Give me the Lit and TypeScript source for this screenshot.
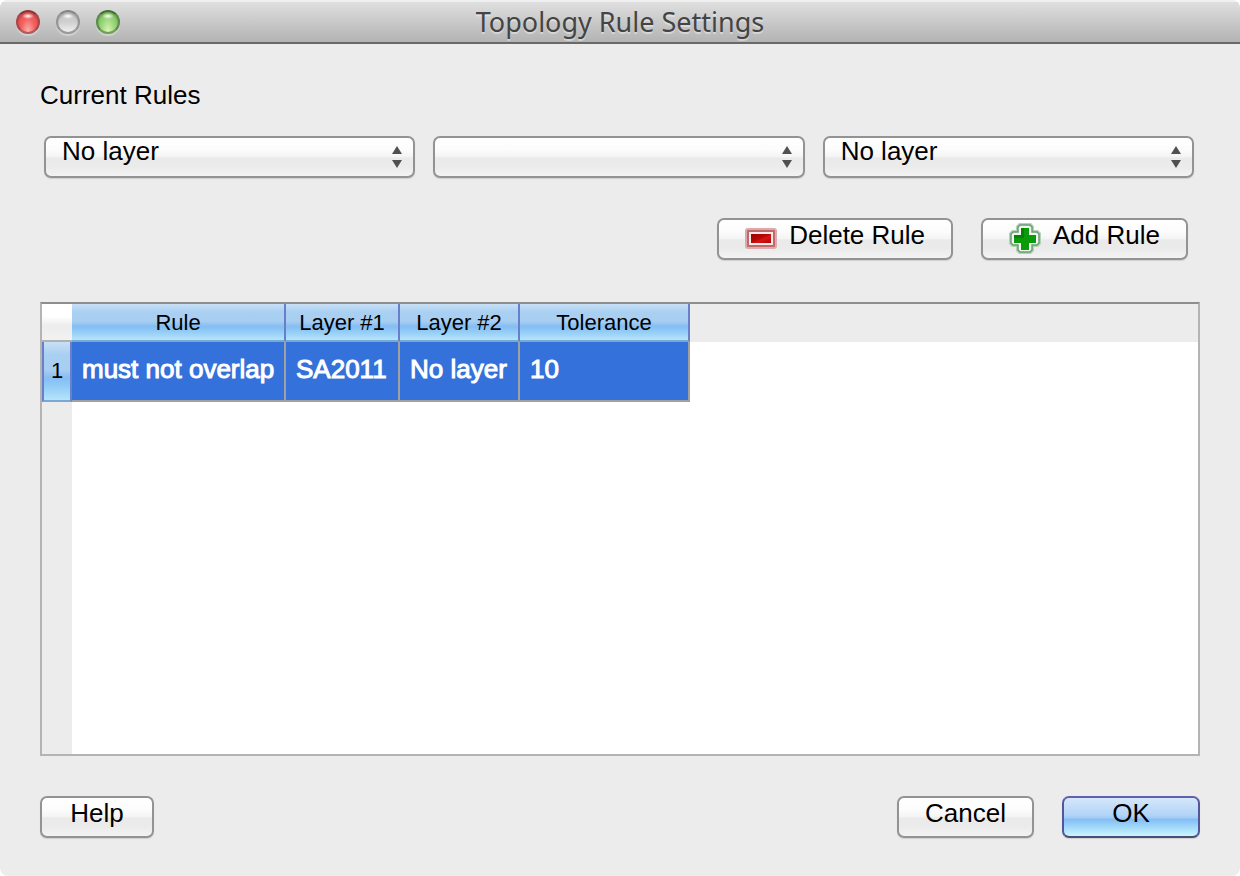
import { LitElement, html, css, svg } from "lit";
import { customElement, property, state } from "lit/decorators.js";

interface Rule {
  rule: string;
  layer1: string;
  layer2: string;
  tolerance: string;
}

const minusIcon = svg`
  <svg class="icon" viewBox="0 0 32 32" aria-hidden="true">
    <defs>
      <linearGradient id="minus-fill" x1="0" y1="0" x2="1" y2="1">
        <stop offset="0" stop-color="#a00000"/>
        <stop offset=".45" stop-color="#b40808"/>
        <stop offset=".6" stop-color="#d81414"/>
        <stop offset="1" stop-color="#b00404"/>
      </linearGradient>
    </defs>
    <rect x="0" y="5" width="32" height="21" rx="3" fill="#dcaaaa"/>
    <rect x="2" y="7" width="28" height="17" rx="1" fill="#c0686a"/>
    <rect x="4" y="9" width="24" height="13" fill="#f6e8e8"/>
    <rect x="6" y="11" width="20" height="9" fill="url(#minus-fill)"/>
  </svg>`;

const plusIcon = svg`
  <svg class="icon" viewBox="0 0 32 32" aria-hidden="true">
    <path d="M10 0H22L25 3V7H29L32 10V21L29 24H25V28L22 31H10L7 28V24H3L0 21V10L3 7H7V3Z" fill="#b4d2b8"/>
    <path d="M11 2H21L23 4V9H28L30 11V20L28 22H23V27L21 29H11L9 27V22H4L2 20V11L4 9H9V4Z" fill="#eef6ee" stroke="#6b9a74" stroke-width="1.5"/>
    <path d="M12 5H20V12H27V20H20V27H12V20H5V12H12Z" fill="#0a9a0a"/>
    <path d="M12 5H15V15H5V12H12Z" fill="#078207"/>
  </svg>`;

@customElement("popup-select")
export class PopupSelect extends LitElement {
  @property() label = "";
  @property({ type: Array }) options: string[] = [];

  static styles = css`
    :host {
      display: block;
      position: relative;
      box-sizing: border-box;
      min-width: 0;
      height: 42px;
      border: 2px solid #939393;
      border-radius: 7px;
      background: linear-gradient(#fff 0, #fcfcfc 30%, #f4f4f4 50%, #eaeaea 52%, #ebebeb 75%, #f3f3f3 100%);
      box-shadow: 0 1px 1px rgba(0, 0, 0, 0.12);
    }
    .control {
      appearance: none;
      display: block;
      box-sizing: border-box;
      width: 100%;
      height: 40px;
      margin: -2px 0 0;
      padding: 0 48px 10px 16px;
      border: 0;
      background: transparent;
      color: #000;
      font: 26px/30px "Liberation Sans", Arial, sans-serif;
    }
    .arrows {
      position: absolute;
      right: 10px;
      top: 7px;
      width: 12px;
      height: 24px;
      pointer-events: none;
    }
  `;

  render() {
    return html`
      <select class="control" aria-label=${this.label}>
        ${this.options.map((o) => html`<option>${o}</option>`)}
      </select>
      <svg class="arrows" viewBox="0 0 12 24" aria-hidden="true">
        <path d="M6 1L11 9H1ZM6 23L11 15H1Z" fill="#505050"/>
      </svg>
    `;
  }
}

@customElement("app-root")
export class AppRoot extends LitElement {
  @state() private rules: Rule[] = [
    { rule: "must not overlap", layer1: "SA2011", layer2: "No layer", tolerance: "10" },
  ];

  static styles = css`
    :host {
      display: block;
      background: #fff;
      color: #000;
      font: 26px/30px "Liberation Sans", Arial, sans-serif;
    }
    .window {
      display: flex;
      flex-direction: column;
      box-sizing: border-box;
      min-height: 100vh;
      border-radius: 8px;
      overflow: hidden;
      background: #ececec;
    }
    .titlebar {
      display: grid;
      grid-template-columns: 1fr auto 1fr;
      align-items: center;
      box-sizing: border-box;
      height: 44px;
      padding: 0 16px;
      border-top: 2px solid #f0f0f0;
      border-bottom: 2px solid #696969;
      background: linear-gradient(#dfdfdf, #b3b3b3);
    }
    .lights { display: flex; gap: 16px; }
    .light {
      box-sizing: border-box;
      width: 24px;
      height: 24px;
      padding: 0;
      border: 2px solid;
      border-radius: 50%;
      box-shadow: 0 2px 1px rgba(255, 255, 255, 0.35), inset 0 2px 2px rgba(0, 0, 0, 0.15);
    }
    .close {
      border-color: #8c3536 #a84648 #b05b5b;
      background: radial-gradient(ellipse 6px 3px at 50% 20%, #fff, transparent),
        radial-gradient(ellipse at 50% 100%, #ffb5ae 0, #f2605e 50%, #e8464a 100%);
    }
    .minimize {
      border-color: #858585 #949494 #9a9a9a;
      background: radial-gradient(ellipse 6px 3px at 50% 20%, #fff, transparent),
        linear-gradient(#c6c6c6, #cfcfcf 50%, #efefef);
    }
    .zoom {
      border-color: #41702f #5c8a4a #709d5a;
      background: radial-gradient(ellipse 6px 3px at 50% 20%, #fff, transparent),
        radial-gradient(ellipse at 50% 100%, #dbf8b5 0, #9bd579 50%, #72ba57 100%);
    }
    .title {
      margin: 0;
      color: #444;
      font: 27px/36px "Noto Sans", "Open Sans", sans-serif;
      text-shadow: 0 2px 0 rgba(255, 255, 255, 0.4);
    }
    .content {
      display: flex;
      flex: 1;
      flex-direction: column;
      padding: 36px 40px 38px;
    }
    .heading { margin: 0 0 26px; font: inherit; }
    .filters {
      display: grid;
      grid-template-columns: repeat(3, 1fr);
      gap: 18px;
      padding: 0 6px 0 4px;
    }
    .actions {
      display: flex;
      justify-content: flex-end;
      gap: 28px;
      padding: 40px 12px 42px 0;
    }
    .button {
      display: inline-flex;
      align-items: center;
      justify-content: center;
      gap: 12px;
      box-sizing: border-box;
      min-width: 114px;
      height: 42px;
      padding: 0 26px;
      border: 2px solid #939393;
      border-radius: 7px;
      background: linear-gradient(#fff 0, #fcfcfc 30%, #f4f4f4 50%, #eaeaea 52%, #ebebeb 75%, #f3f3f3 100%);
      box-shadow: 0 1px 1px rgba(0, 0, 0, 0.12);
      color: #000;
      font: inherit;
      white-space: nowrap;
    }
    .caption { padding-bottom: 8px; }
    .icon { flex: none; width: 32px; height: 32px; }
    .primary {
      min-width: 138px;
      border-color: #5f60ae #55569a #4c4e78;
      background: linear-gradient(#d6e7fa 0, #b2d4f7 45%, #9ecbf7 53%, #82bdf6 56%, #a5dafb 78%, #c9f5fd 100%);
    }
    .frame {
      flex: 1;
      border: 2px solid #b4b4b4;
      border-top-color: #8e8e8e;
      background:
        linear-gradient(#ececec, #ececec) 0 0 / 100% 38px no-repeat,
        linear-gradient(#ececec, #ececec) 0 0 / 30px 100% no-repeat,
        #fff;
    }
    .rules { border-spacing: 0; table-layout: fixed; width: 648px; }
    .c-index { width: 30px; }
    .c-rule { width: 214px; }
    .c-layer1 { width: 114px; }
    .c-layer2 { width: 120px; }
    .c-tolerance { width: 170px; }
    .corner, .column, .index {
      box-sizing: border-box;
      padding: 0;
      font-size: 22px;
      font-weight: normal;
      text-align: center;
    }
    .corner {
      height: 38px;
      border-bottom: 2px solid #b0b0b0;
      background: linear-gradient(#fff 35%, #ececec 60%, #f2f2f2);
    }
    .column, .index {
      border-bottom: 2px solid #79a9d3;
      border-right: 2px solid #6a7fca;
      background: linear-gradient(#c9e0f6 0, #a9cff1 22%, #a8cef1 48%, #85bdf4 62%, #90caf6 75%, #b5e4fa 100%);
    }
    .column { height: 38px; padding-top: 2px; }
    .index { height: 60px; border-left: 2px solid #6a7fca; }
    .cell {
      box-sizing: border-box;
      padding: 0 0 4px 10px;
      border-right: 2px solid #a0a0a0;
      border-bottom: 2px solid #a0a0a0;
      background: #3471da;
      color: #fff;
      -webkit-text-stroke: 1px #fff;
      white-space: nowrap;
    }
    .footer { display: flex; gap: 28px; padding-top: 40px; }
    .help { margin-right: auto; }
  `;

  render() {
    return html`
      <main class="window">
        <header class="titlebar">
          <div class="lights">
            <button class="light close" aria-label="Close"></button>
            <button class="light minimize" aria-label="Minimize"></button>
            <button class="light zoom" aria-label="Zoom"></button>
          </div>
          <h1 class="title">Topology Rule Settings</h1>
        </header>
        <div class="content">
          <h2 class="heading">Current Rules</h2>
          <div class="filters">
            <popup-select label="First layer" .options=${["No layer"]}></popup-select>
            <popup-select label="Rule" .options=${[""]}></popup-select>
            <popup-select label="Second layer" .options=${["No layer"]}></popup-select>
          </div>
          <div class="actions">
            <button class="button">${minusIcon}<span class="caption">Delete Rule</span></button>
            <button class="button">${plusIcon}<span class="caption">Add Rule</span></button>
          </div>
          <div class="frame">
            <table class="rules">
              <colgroup>
                <col class="c-index" /><col class="c-rule" /><col class="c-layer1" />
                <col class="c-layer2" /><col class="c-tolerance" />
              </colgroup>
              <thead>
                <tr>
                  <td class="corner"></td>
                  <th class="column" scope="col">Rule</th>
                  <th class="column" scope="col">Layer #1</th>
                  <th class="column" scope="col">Layer #2</th>
                  <th class="column" scope="col">Tolerance</th>
                </tr>
              </thead>
              <tbody>
                ${this.rules.map(
                  (r, i) => html`<tr>
                    <th class="index" scope="row">${i + 1}</th>
                    <td class="cell">${r.rule}</td>
                    <td class="cell">${r.layer1}</td>
                    <td class="cell">${r.layer2}</td>
                    <td class="cell">${r.tolerance}</td>
                  </tr>`
                )}
              </tbody>
            </table>
          </div>
          <footer class="footer">
            <button class="button help"><span class="caption">Help</span></button>
            <button class="button"><span class="caption">Cancel</span></button>
            <button class="button primary"><span class="caption">OK</span></button>
          </footer>
        </div>
      </main>
    `;
  }
}
